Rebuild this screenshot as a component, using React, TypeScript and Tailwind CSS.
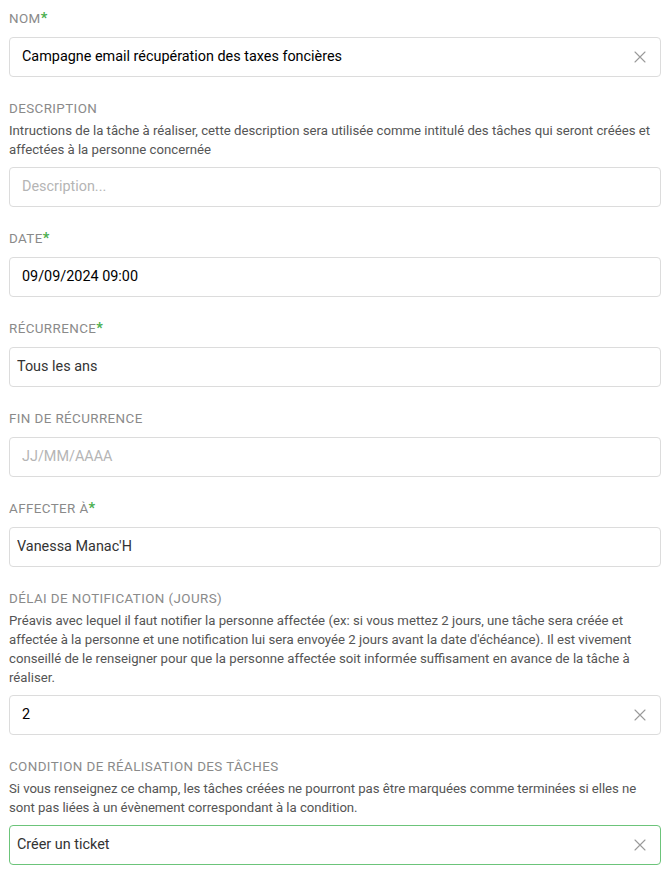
import { ReactNode } from 'react';

const font = { fontFamily: 'Roboto, "Noto Sans", sans-serif' };

function ClearIcon() {
  return (
    <svg width="12" height="12" viewBox="0 0 12 12" className="shrink-0">
      <path d="M1 1L11 11M11 1L1 11" stroke="#9a9a9a" strokeWidth="1.1" strokeLinecap="round" />
    </svg>
  );
}

interface FieldProps {
  label: string;
  required?: boolean;
  help?: string;
  tight?: boolean;
  children: ReactNode;
}

function Field({ label, required = false, help, tight = false, children }: FieldProps) {
  return (
    <div className="mb-[23px]">
      <div className={'h-[18px] text-[13.4px] leading-[18px] ' + (help ? 'mb-[3px]' : 'mb-[9px]')}>
        <span className="uppercase tracking-[0.4px] text-[#8a8a8a]">{label}</span>
        {required && <span className="text-[14.5px] font-bold text-[#4cb050]">*</span>}
      </div>
      {help && (
        <p
          className={
            'mb-[8px] text-[13.2px] leading-[19px] text-[#555555] ' +
            (tight ? 'tracking-[-0.05px]' : '')
          }
        >
          {help}
        </p>
      )}
      {children}
    </div>
  );
}

interface BoxProps {
  value?: string;
  placeholder?: string;
  clearable?: boolean;
  select?: boolean;
  active?: boolean;
}

function Box({ value, placeholder, clearable = false, select = false, active = false }: BoxProps) {
  return (
    <div
      className={
        'flex h-10 items-center rounded-[4px] border bg-white pr-[14px] ' +
        (select ? 'pl-[7px] ' : 'pl-[12px] ') +
        (active ? 'border-[#6cc47a]' : 'border-[#dcdcdc]')
      }
    >
      <span
        className={
          'flex-1 truncate text-[14.4px] ' +
          (value ? (select ? 'text-[#333333]' : 'text-black') : 'text-[#b5b5b5]')
        }
      >
        {value ?? placeholder}
      </span>
      {clearable && <ClearIcon />}
    </div>
  );
}

export default function App() {
  return (
    <div className="min-h-screen bg-white px-[9px] pt-[10px]" style={font}>
      <Field label="Nom" required>
        <Box value="Campagne email récupération des taxes foncières" clearable />
      </Field>

      <Field
        label="Description"
        help="Intructions de la tâche à réaliser, cette description sera utilisée comme intitulé des tâches qui seront créées et affectées à la personne concernée"
      >
        <Box placeholder="Description..." />
      </Field>

      <Field label="Date" required>
        <Box value="09/09/2024 09:00" />
      </Field>

      <Field label="Récurrence" required>
        <Box value="Tous les ans" select />
      </Field>

      <Field label="Fin de récurrence">
        <Box placeholder="JJ/MM/AAAA" />
      </Field>

      <Field label="Affecter à" required>
        <Box value="Vanessa Manac'H" select />
      </Field>

      <Field
        label="Délai de notification (jours)"
        help="Préavis avec lequel il faut notifier la personne affectée (ex: si vous mettez 2 jours, une tâche sera créée et affectée à la personne et une notification lui sera envoyée 2 jours avant la date d'échéance). Il est vivement conseillé de le renseigner pour que la personne affectée soit informée suffisament en avance de la tâche à réaliser."
      >
        <Box value="2" clearable />
      </Field>

      <Field
        label="Condition de réalisation des tâches"
        help="Si vous renseignez ce champ, les tâches créées ne pourront pas être marquées comme terminées si elles ne sont pas liées à un évènement correspondant à la condition."
        tight
      >
        <Box value="Créer un ticket" select clearable active />
      </Field>
    </div>
  );
}
